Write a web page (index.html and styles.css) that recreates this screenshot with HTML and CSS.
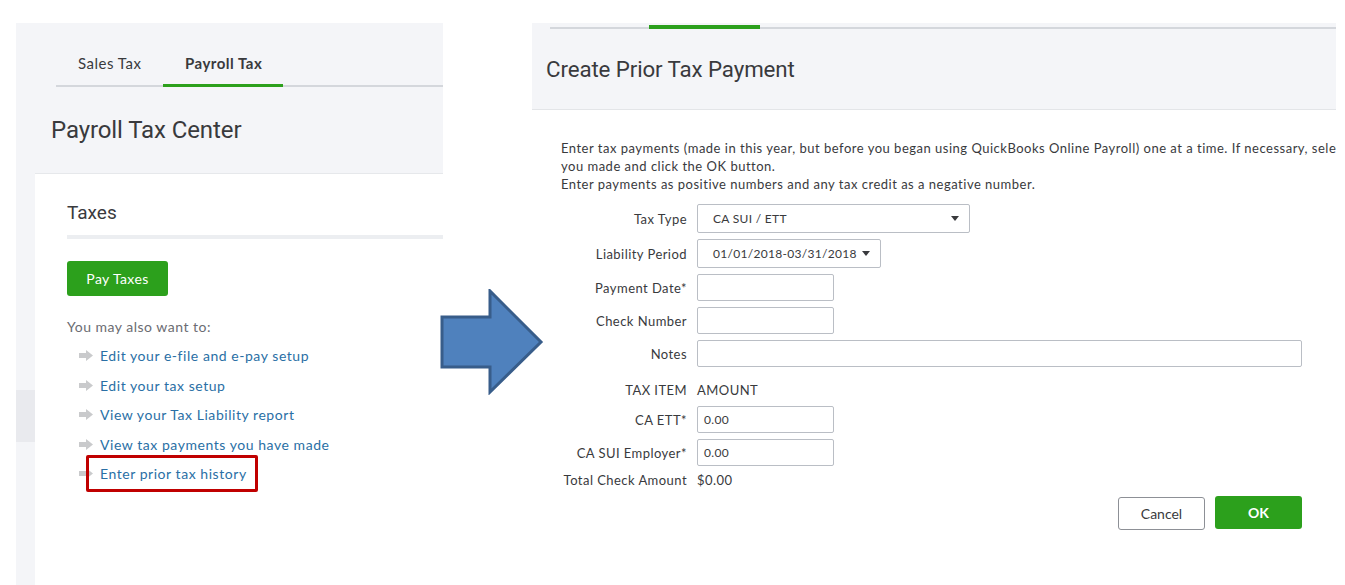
FILE: index.html
```html
<!DOCTYPE html>
<html lang="en">
<head>
<meta charset="utf-8">
<title>Payroll Tax Center</title>
<link rel="stylesheet" href="styles.css">
</head>
<body>
<div class="page">
  <section class="left">
    <nav class="tabs">
      <div class="tab tab-sales">Sales Tax</div>
      <div class="tab tab-payroll active">Payroll Tax</div>
    </nav>
    <h1 class="page-title">Payroll Tax Center</h1>
    <div class="lower">
      <div class="strip"><div class="strip-block"></div></div>
      <div class="card">
        <h2 class="card-title">Taxes</h2>
        <div class="divider"></div>
        <button class="btn-green pay">Pay Taxes</button>
        <p class="also">You may also want to:</p>
        <ul class="links">
          <li><span class="li-arrow"><svg width="14" height="11" viewBox="0 0 14 11"><path d="M0 3h7V0l7 5.5-7 5.5V8H0z" fill="#c9cacc"/></svg></span><a>Edit your e-file and e-pay setup</a></li>
          <li><span class="li-arrow"><svg width="14" height="11" viewBox="0 0 14 11"><path d="M0 3h7V0l7 5.5-7 5.5V8H0z" fill="#c9cacc"/></svg></span><a>Edit your tax setup</a></li>
          <li><span class="li-arrow"><svg width="14" height="11" viewBox="0 0 14 11"><path d="M0 3h7V0l7 5.5-7 5.5V8H0z" fill="#c9cacc"/></svg></span><a>View your Tax Liability report</a></li>
          <li><span class="li-arrow"><svg width="14" height="11" viewBox="0 0 14 11"><path d="M0 3h7V0l7 5.5-7 5.5V8H0z" fill="#c9cacc"/></svg></span><a>View tax payments you have made</a></li>
          <li class="marked"><span class="li-arrow"><svg width="14" height="11" viewBox="0 0 14 11"><path d="M0 3h7V0l7 5.5-7 5.5V8H0z" fill="#c9cacc"/></svg></span><a>Enter prior tax history</a><span class="highlight"></span></li>
        </ul>
      </div>
    </div>
  </section>

  <div class="middle">
    <svg class="big-arrow" width="104" height="106" viewBox="0 0 104 106">
      <polygon points="2,28 50,28 50,2 101,53 50,103 50,78 2,78" fill="#4f81bd" stroke="#385d8a" stroke-width="3" stroke-linejoin="miter"/>
    </svg>
  </div>

  <section class="right">
    <header class="right-head">
      <div class="right-tabline"><span class="green-seg"></span></div>
      <h1 class="right-title">Create Prior Tax Payment</h1>
    </header>
    <div class="right-body">
      <p class="intro">Enter tax payments (made in this year, but before you began using QuickBooks Online Payroll) one at a time. If necessary, select<br>you made and click the OK button.<br>Enter payments as positive numbers and any tax credit as a negative number.</p>
      <div class="form">
        <label class="lbl">Tax Type</label>
        <div class="field select w-tax"><span>CA SUI / ETT</span><span class="caret"></span></div>

        <label class="lbl">Liability Period</label>
        <div class="field select w-period"><span>01/01/2018-03/31/2018</span><span class="caret"></span></div>

        <label class="lbl">Payment Date*</label>
        <div class="field input w-short"></div>

        <label class="lbl">Check Number</label>
        <div class="field input w-short"></div>

        <label class="lbl">Notes</label>
        <div class="field input w-notes"></div>

        <span class="lbl head">TAX ITEM</span>
        <span class="val head">AMOUNT</span>

        <label class="lbl">CA ETT*</label>
        <div class="field input amount w-short">0.00</div>

        <label class="lbl">CA SUI Employer*</label>
        <div class="field input amount w-short">0.00</div>

        <span class="lbl total">Total Check Amount</span>
        <span class="val total">$0.00</span>
      </div>
      <div class="actions">
        <button class="btn-cancel">Cancel</button>
        <button class="btn-green ok">OK</button>
      </div>
    </div>
  </section>
</div>
</body>
</html>
```

FILE: styles.css
```css
* { box-sizing: border-box; }
html, body { margin: 0; padding: 0; }
body {
  background: #ffffff;
  font-family: Lato, "Open Sans", Arial, sans-serif;
  color: #393a3d;
  width: 1345px;
  height: 585px;
  overflow: hidden;
}
.page {
  display: flex;
  align-items: flex-start;
  height: 585px;
}

/* ---------- left panel ---------- */
.left {
  margin-left: 16px;
  margin-top: 23px;
  width: 427px;
  height: 562px;
  background: #f4f5f8;
  display: flex;
  flex-direction: column;
}
.tabs {
  margin-left: 40px;
  height: 64px;
  display: flex;
  align-items: flex-end;
  border-bottom: 2px solid #d4d7dc;
}
.tab {
  font-size: 15px;
  line-height: 20px;
  letter-spacing: 0.5px;
  padding: 0 0 11px 22px;
  color: #393a3d;
  margin-bottom: -2px;
  border-bottom: 3px solid transparent;
}
.tab-sales { width: 107px; }
.tab-payroll { width: 120px; }
.tab.active {
  font-weight: 700;
  border-bottom-color: #2ca01c;
}
.page-title {
  margin: 29px 0 0 35px;
  font-family: Roboto, "DejaVu Sans", sans-serif;
  font-weight: 400;
  font-size: 24px;
  line-height: 28px;
  letter-spacing: -0.1px;
  color: #393a3d;
  height: 57px;
}
.lower {
  flex: 1;
  display: flex;
}
.strip {
  width: 19px;
}
.strip-block {
  margin-top: 217px;
  height: 52px;
  background: #e9eaee;
}
.card {
  flex: 1;
  background: #ffffff;
  border-top: 1px solid #e6e8eb;
  padding: 27px 0 0 32px;
}
.card-title {
  margin: 0;
  font-family: Roboto, "DejaVu Sans", sans-serif;
  font-weight: 400;
  font-size: 19px;
  line-height: 24px;
  color: #393a3d;
}
.divider {
  margin-top: 10px;
  height: 4px;
  background: #eceef1;
}
.btn-green {
  display: block;
  border: 0;
  background: #2ca01c;
  color: #ffffff;
  font-family: Lato, "Open Sans", sans-serif;
  border-radius: 3px;
  cursor: pointer;
}
.pay {
  margin-top: 22px;
  width: 101px;
  height: 35px;
  font-size: 14px;
  font-weight: 400;
  letter-spacing: 0.4px;
}
.also {
  margin: 21px 0 0;
  font-size: 14px;
  line-height: 20px;
  letter-spacing: 0.5px;
  color: #6b6c72;
}
.links {
  list-style: none;
  margin: 4px 0 0;
  padding: 0 0 0 12px;
}
.links li {
  display: flex;
  align-items: center;
  height: 29.5px;
  position: relative;
}
.li-arrow {
  width: 21px;
  display: flex;
  align-items: center;
}
.links a {
  font-size: 14px;
  letter-spacing: 0.55px;
  color: #2a6fa5;
  text-decoration: none;
}
.highlight {
  position: absolute;
  left: 7px;
  top: -4px;
  width: 172px;
  height: 37px;
  border: 3px solid #c00000;
  border-radius: 2px;
}

/* ---------- arrow ---------- */
.middle {
  width: 89px;
  padding-top: 289px;
}
.big-arrow {
  display: block;
  margin-left: -3px;
}

/* ---------- right panel ---------- */
.right {
  margin-top: 23px;
  width: 804px;
  height: 562px;
  overflow: hidden;
}
.right-head {
  height: 87px;
  background: #f4f5f8;
  border-bottom: 1px solid #e3e5e8;
  padding-top: 4px;
}
.right-tabline {
  margin-left: 18px;
  height: 2px;
  background: #d4d7dc;
  position: relative;
}
.green-seg {
  position: absolute;
  left: 99px;
  top: -2px;
  width: 111px;
  height: 4px;
  background: #2ca01c;
}
.right-title {
  margin: 26px 0 0 14px;
  font-family: Roboto, "DejaVu Sans", sans-serif;
  font-weight: 400;
  font-size: 22.3px;
  line-height: 28px;
  letter-spacing: -0.1px;
  color: #393a3d;
}
.right-body {
  padding: 29px 0 0 29px;
}
.intro {
  margin: 0;
  font-size: 13px;
  line-height: 18px;
  letter-spacing: 0.5px;
  white-space: nowrap;
  color: #393a3d;
}
.form {
  margin-top: 11px;
  display: grid;
  grid-template-columns: 126px auto;
  column-gap: 10px;
  row-gap: 6px;
  align-items: center;
  justify-items: start;
}
.lbl {
  justify-self: end;
  font-size: 13px;
  letter-spacing: 0.45px;
  color: #393a3d;
  white-space: nowrap;
}
.val { font-size: 13px; letter-spacing: 0.45px; color: #393a3d; }
.field {
  border: 1px solid #babec5;
  border-radius: 2px;
  background: #ffffff;
  font-size: 12px;
  letter-spacing: 0.3px;
  color: #393a3d;
  display: flex;
  align-items: center;
}
.select {
  height: 29px;
  padding: 0 10px 0 15px;
  justify-content: space-between;
}
.input { height: 27px; }
.amount { padding-left: 6px; }
.w-tax { width: 273px; }
.w-period { width: 184px; }
.w-short { width: 137px; }
.w-notes { width: 605px; }
.caret {
  width: 0;
  height: 0;
  border-left: 4px solid transparent;
  border-right: 4px solid transparent;
  border-top: 5px solid #393a3d;
}
.head { height: 27px; padding-top: 7px; line-height: 20px; }
.total { height: 16px; line-height: 16px; }
.actions {
  display: flex;
  justify-content: flex-end;
  gap: 10px;
  width: 741px;
  margin-top: 8px;
  align-items: flex-start;
}
.btn-cancel {
  width: 87px;
  height: 33px;
  margin-top: 1px;
  background: #ffffff;
  border: 1px solid #8d9096;
  border-radius: 3px;
  font-family: Lato, "Open Sans", sans-serif;
  font-size: 14px;
  color: #393a3d;
}
.ok {
  width: 87px;
  height: 33px;
  font-size: 14px;
  font-weight: 700;
}
```
